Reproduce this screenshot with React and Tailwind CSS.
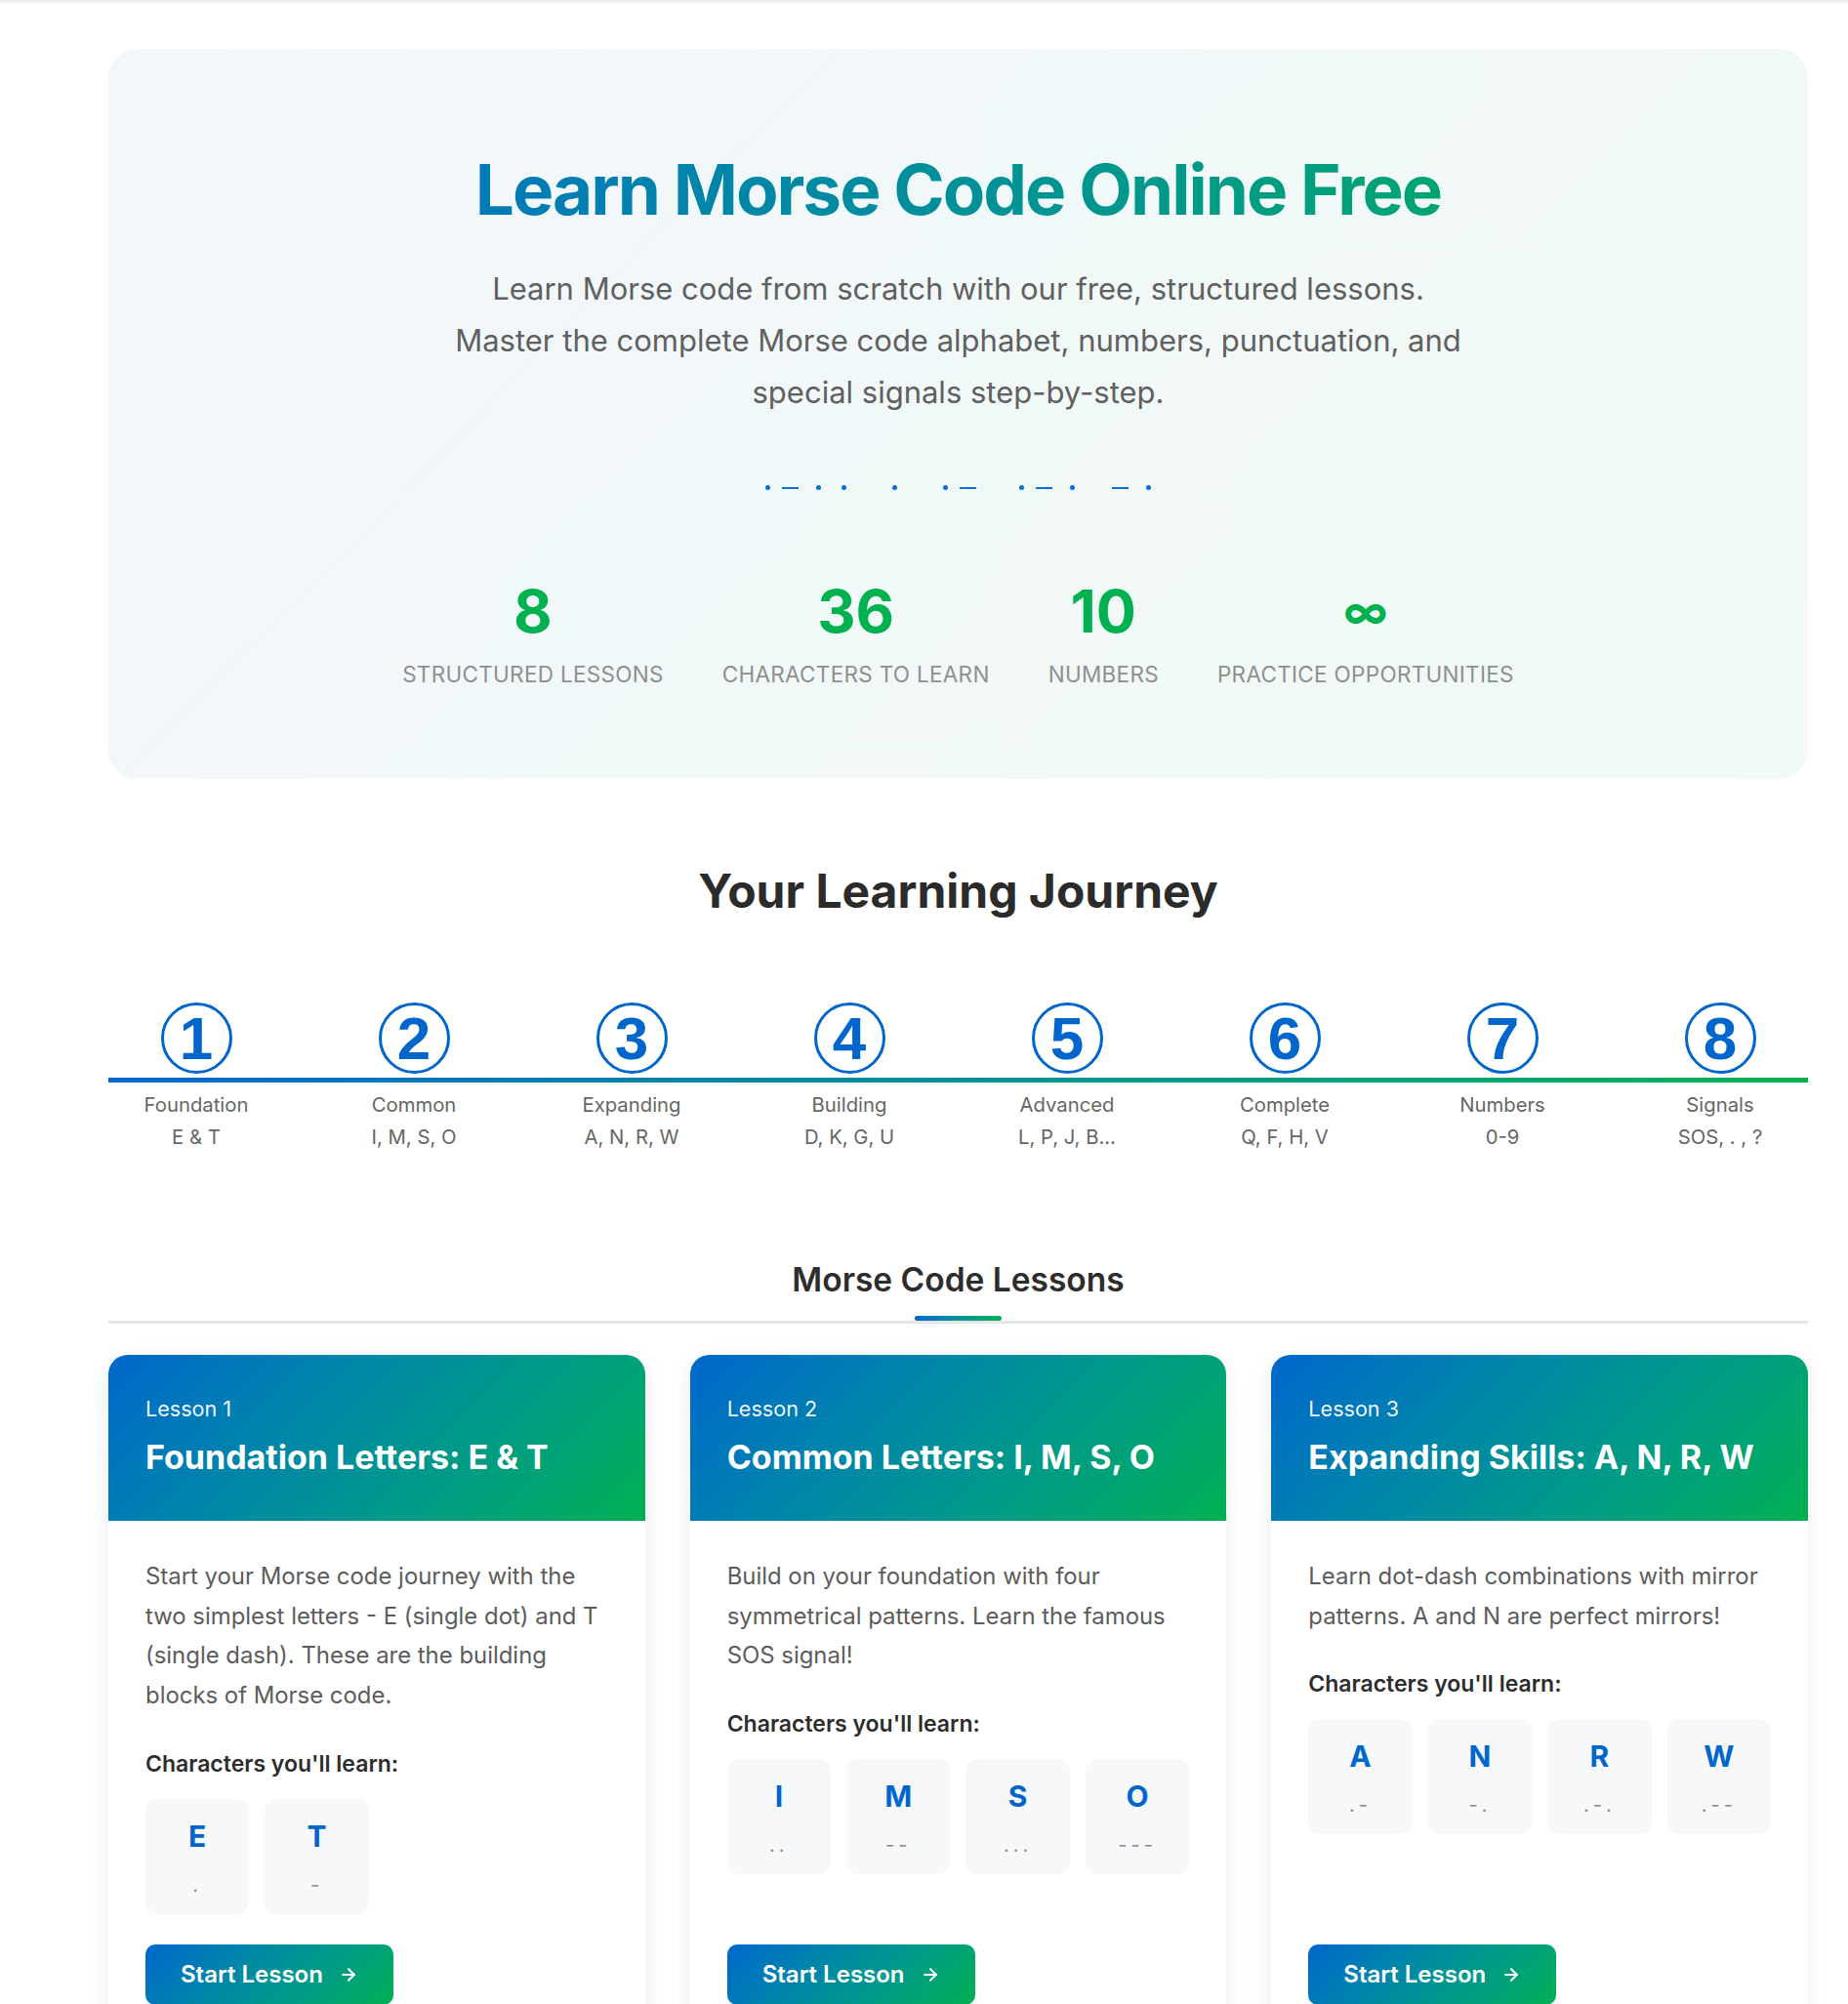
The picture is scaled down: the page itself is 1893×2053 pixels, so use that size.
import React from "react";
import { ArrowRight } from "lucide-react";

const MORSE = [
  "dot", "dash", "dot", "dot", "gap",
  "dot", "gap",
  "dot", "dash", "gap",
  "dot", "dash", "dot", "gap",
  "dash", "dot",
];

const STATS = [
  { n: "8", l: "Structured Lessons" },
  { n: "36", l: "Characters to Learn" },
  { n: "10", l: "Numbers" },
  { n: "∞", l: "Practice Opportunities", small: true },
];

const STEPS = [
  { n: "1", a: "Foundation", b: "E & T" },
  { n: "2", a: "Common", b: "I, M, S, O" },
  { n: "3", a: "Expanding", b: "A, N, R, W" },
  { n: "4", a: "Building", b: "D, K, G, U" },
  { n: "5", a: "Advanced", b: "L, P, J, B..." },
  { n: "6", a: "Complete", b: "Q, F, H, V" },
  { n: "7", a: "Numbers", b: "0-9" },
  { n: "8", a: "Signals", b: "SOS, . , ?" },
];

const LESSONS = [
  {
    k: "Lesson 1",
    t: "Foundation Letters: E & T",
    d: "Start your Morse code journey with the two simplest letters - E (single dot) and T (single dash). These are the building blocks of Morse code.",
    c: [["E", "."], ["T", "-"]],
  },
  {
    k: "Lesson 2",
    t: "Common Letters: I, M, S, O",
    d: "Build on your foundation with four symmetrical patterns. Learn the famous SOS signal!",
    c: [["I", ".."], ["M", "--"], ["S", "..."], ["O", "---"]],
  },
  {
    k: "Lesson 3",
    t: "Expanding Skills: A, N, R, W",
    d: "Learn dot-dash combinations with mirror patterns. A and N are perfect mirrors!",
    c: [["A", ".-"], ["N", "-."], ["R", ".-."], ["W", ".--"]],
  },
];

function MorseRow() {
  return (
    <div className="flex h-[20px] items-center justify-center">
      {MORSE.map((m, i) => (
        <div key={i} className="flex w-[26px] items-center justify-center">
          {m === "dot" && <span className="block h-[5px] w-[5px] rounded-full bg-[#0a6fd6]" />}
          {m === "dash" && <span className="-ml-[6px] mt-[2px] block h-[2px] w-[17px] bg-[#0a6fd6]" />}
        </div>
      ))}
    </div>
  );
}

function LessonCard({ lesson }) {
  return (
    <div className="flex flex-col overflow-hidden rounded-[20px] bg-white shadow-[0_4px_22px_rgba(0,0,0,0.08)]">
      <div className="h-[170px] bg-linear-135 from-[#0066cc] to-[#00b04f] px-[38px] pt-[39px]">
        <div className="text-[21.6px] leading-[32px] text-white/95">{lesson.k}</div>
        <div className="mt-[13px] text-[34px] font-bold leading-[42px] text-white">{lesson.t}</div>
      </div>
      <div className="flex flex-1 flex-col px-[38px] pt-[37px] pb-[38px]">
        <p className="text-[23.9px] leading-[40.7px] text-[#5c5c5c]">{lesson.d}</p>
        <div className="mt-[33px] text-[23px] font-semibold leading-[32px] text-[#2d2d2d]">
          Characters you'll learn:
        </div>
        <div className="mt-[20px] grid grid-cols-4 gap-[16px]">
          {lesson.c.map(([ch, code]) => (
            <div key={ch} className="flex h-[118px] flex-col items-center rounded-[12px] bg-[#f6f8fa] pt-[21px]">
              <div className="text-[30px] font-bold leading-[35px] text-[#0066cc]">{ch}</div>
              <div className="mt-[20px] text-[20px] leading-[24px] tracking-[4px] text-[#8c8c8c]">{code}</div>
            </div>
          ))}
        </div>
        <div className="mt-auto pt-[31px]">
          <button className="flex h-[62px] items-center gap-[16px] rounded-[10px] bg-linear-135 from-[#0066cc] to-[#00b04f] px-[36px] text-[24px] font-semibold text-white">
            Start Lesson
            <ArrowRight size={20} strokeWidth={2.5} />
          </button>
        </div>
      </div>
    </div>
  );
}

export default function App() {
  return (
    <div className="min-h-screen bg-white" style={{ fontFamily: "Inter, 'Noto Sans', sans-serif" }}>
      <div className="h-[5px] bg-linear-to-b from-[#ebebeb] to-white" />
      <div className="ml-[111px] w-[1741px] pb-[60px]">
        <section className="mt-[45px] flex h-[748px] flex-col items-center rounded-[30px] bg-linear-135 from-[#f2f7fc] to-[#f1faf5] px-[40px] pt-[100px]">
          <h1 className="w-full bg-linear-to-r from-[#0066cc] to-[#00b04f] bg-clip-text text-center text-[71px] font-bold leading-[88px] tracking-[-0.028em] text-transparent">
            Learn Morse Code Online Free
          </h1>
          <p className="mt-[31px] whitespace-nowrap text-center text-[31px] leading-[53px] text-[#606060]">
            Learn Morse code from scratch with our free, structured lessons.
            <br />
            Master the complete Morse code alphabet, numbers, punctuation, and
            <br />
            special signals step-by-step.
          </p>
          <div className="mt-[61px]">
            <MorseRow />
          </div>
          <div className="mt-[86px] flex justify-center gap-[60px]">
            {STATS.map((s) => (
              <div key={s.l} className="flex flex-col items-center">
                <div className="flex h-[62px] items-center text-[61px] font-bold leading-[62px] text-[#00b14f]">
                  {s.small ? <span className="text-[46px]">{s.n}</span> : s.n}
                </div>
                <div className="mt-[17px] text-[22.5px] uppercase leading-[33px] tracking-[0.3px] text-[#8f8f8f]">
                  {s.l}
                </div>
              </div>
            ))}
          </div>
        </section>

        <h2 className="mt-[87px] text-center text-[48px] font-bold leading-[56px] text-[#2b2b2b]">
          Your Learning Journey
        </h2>

        <div className="mt-[86px]">
          <div className="flex justify-between">
            {STEPS.map((s) => (
              <div key={s.n} className="flex w-[180px] justify-center">
                <div className="flex h-[73px] w-[73px] items-center justify-center rounded-full border-[3px] border-[#0066cc]">
                  <span
                    className="text-[62px] font-bold leading-none text-[#0066cc]"
                    style={{ fontFamily: "'Liberation Sans', Arial, sans-serif" }}
                  >
                    {s.n}
                  </span>
                </div>
              </div>
            ))}
          </div>
          <div className="mt-[4px] h-[5px] bg-linear-to-r from-[#0066cc] to-[#00b04f]" />
          <div className="mt-[6px] flex justify-between">
            {STEPS.map((s) => (
              <div key={s.n} className="w-[180px] text-center text-[20.3px] leading-[33px] text-[#666666]">
                <div>{s.a}</div>
                <div>{s.b}</div>
              </div>
            ))}
          </div>
        </div>

        <div className="mt-[107px] flex flex-col items-center">
          <h3 className="text-[33.5px] font-semibold leading-[47px] text-[#2d2d2d]">Morse Code Lessons</h3>
          <div className="mt-[13px] h-[5px] w-[89px] rounded-full bg-linear-to-r from-[#0066cc] to-[#00b04f]" />
        </div>
        <div className="h-[3px] bg-[#e6e6e6]" />

        <div className="mt-[32px] grid grid-cols-3 gap-[46px]">
          {LESSONS.map((l) => (
            <LessonCard key={l.k} lesson={l} />
          ))}
        </div>
      </div>
    </div>
  );
}
